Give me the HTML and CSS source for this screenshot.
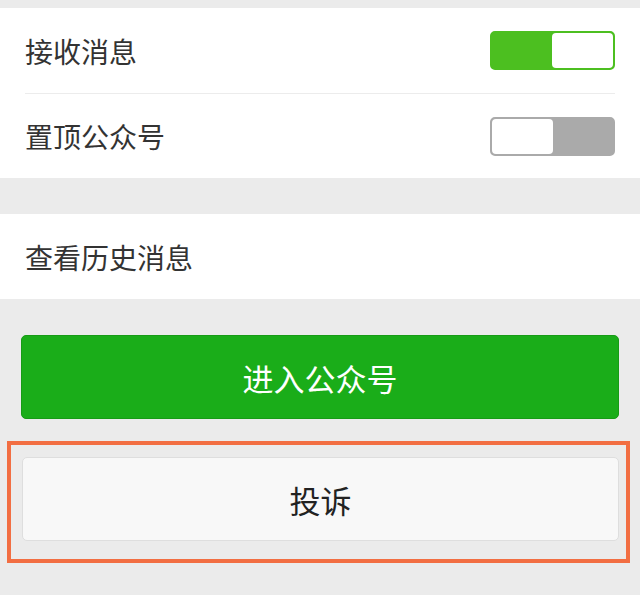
FILE: index.html
```html
<!DOCTYPE html>
<html lang="zh-CN">
<head>
  <meta charset="UTF-8">
  <meta name="viewport" content="width=device-width, initial-scale=1.0">
  <title>公众号设置</title>
  <link rel="stylesheet" href="styles.css">
</head>
<body>
  <div class="group">
    <div class="row">
      <span class="label">接收消息</span>
      <div class="switch on"><span class="knob"></span></div>
    </div>
    <div class="row">
      <span class="label">置顶公众号</span>
      <div class="switch"><span class="knob"></span></div>
    </div>
  </div>

  <div class="group">
    <div class="row">
      <span class="label">查看历史消息</span>
    </div>
  </div>

  <div class="actions">
    <button class="btn primary">进入公众号</button>
  </div>
  <div class="highlight">
    <button class="btn plain">投诉</button>
  </div>
</body>
</html>
```

FILE: styles.css
```css
* {
  margin: 0;
  padding: 0;
  box-sizing: border-box;
}
body {
  background-color: #ebebeb;
  font-family: 'Noto Sans CJK SC', sans-serif;
  color: #333;
  padding-top: 8px;
}
.group {
  background: #fff;
  margin-bottom: 36px;
  padding: 0 25px;
}
.row {
  height: 85px;
  display: flex;
  align-items: center;
  justify-content: space-between;
}
.row + .row {
  border-top: 1px solid #ececec;
}
.label {
  font-size: 28px;
}
.switch {
  width: 125px;
  height: 39px;
  border-radius: 5px;
  border: 2px solid #aaa;
  background: #aaa;
  display: flex;
  justify-content: flex-start;
}
.switch .knob {
  width: 61px;
  height: 100%;
  background: #fff;
  border-radius: 4px;
}
.switch.on {
  border-color: #4cbf20;
  background: #4cbf20;
  justify-content: flex-end;
}
.actions {
  margin-top: -36px;
  padding: 36px 21px 0;
}
.btn {
  display: block;
  width: 100%;
  height: 84px;
  font-family: 'Noto Sans CJK SC', sans-serif;
  font-size: 31px;
  border-radius: 5px;
  cursor: pointer;
}
.btn.primary {
  background: #1aad19;
  border: 1px solid #179b16;
  color: #fff;
}
.highlight {
  margin: 22px 10px 0 7px;
  border: 4px solid #f26e42;
  padding: 12px 7px 18px 11px;
}
.btn.plain {
  background: #f8f8f8;
  border: 1px solid #dedede;
  color: #222;
}
```
